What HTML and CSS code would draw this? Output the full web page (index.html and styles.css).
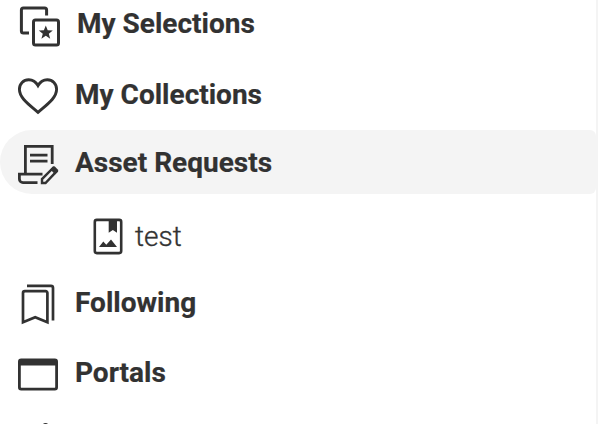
FILE: index.html
```html
<!DOCTYPE html>
<html lang="en">
<head>
<meta charset="utf-8">
<title>Navigation</title>
<link rel="stylesheet" href="styles.css">
</head>
<body>
<nav class="sidebar">
  <a class="item item-selections">
    <svg class="icon" viewBox="0 -9 74 64" fill="none" stroke="currentColor" stroke-width="3">
      <path d="M29 33H23.400a2 2 0 0 1-2-2V9.900a2 2 0 0 1 2-2H44.600a2 2 0 0 1 2 2V15.500"/>
      <rect x="33.500" y="19.900" width="25" height="25.200" rx="2"/>
      <path fill="currentColor" stroke="none" d="M45.800 25.400l1.900 4.900 5.100.2-4 3.200 1.400 5-4.400-2.900-4.400 2.900 1.400-5-4-3.200 5.100-.2z"/>
    </svg>
    <span class="label">My Selections</span>
  </a>
  <a class="item">
    <svg class="icon" viewBox="0 62 74 64" fill="none" stroke="currentColor" stroke-width="2.900">
      <path d="M38 112.300C29 104.500 19.400 98 19.400 89.300C19.400 83.700 23.400 79.700 28.700 79.700C32.500 79.700 36 82 38 85.600C40 82 43.500 79.700 47.300 79.700C52.600 79.700 56.600 83.700 56.600 89.300C56.600 98 47 104.500 38 112.300Z"/>
    </svg>
    <span class="label">My Collections</span>
  </a>
  <a class="item item-active">
    <svg class="icon" viewBox="0 130 74 64" fill="none" stroke="currentColor" stroke-width="2.800">
      <path d="M25.400 173V146.300H52.200V164M30 155.200H47.500M30 161.200H47.500"/>
      <path d="M42.500 174.200H19.400V179a3.600 3.600 0 0 0 3.600 3.600H37.500"/>
      <path stroke-width="2.400" d="M42 183V179.100L53.100 168L56.500 171.400L45.500 183Z"/>
      <path fill="currentColor" stroke="none" d="M50.300 169.400L53.200 166.500Q54 166 54.800 166.500L58 169.800Q58.500 170.700 58 171.500L55.100 174.300Z"/>
    </svg>
    <span class="label">Asset Requests</span>
  </a>
  <a class="item item-child">
    <svg class="icon icon-child" viewBox="76 204 56 64" fill="none" stroke="currentColor" stroke-width="2.600">
      <rect x="94.800" y="219.900" width="26.400" height="33.200" rx="2"/>
      <path fill="currentColor" stroke="none" d="M108.700 220H117V232.800L112.850 230L108.700 232.800ZM99 247L103.300 241.500L106.300 244.700L111 239.500L117 247Z"/>
    </svg>
    <span class="label">test</span>
  </a>
  <a class="item item-following">
    <svg class="icon" viewBox="0 270 74 64" fill="none" stroke="currentColor" stroke-width="2.700">
      <path d="M23 322.300V292.900a1.800 1.800 0 0 1 1.800-1.800H45.600a1.800 1.800 0 0 1 1.800 1.800V322.300L35.200 317.200Z"/>
      <path d="M27 285.800H51a2 2 0 0 1 2 2V320.500"/>
    </svg>
    <span class="label">Following</span>
  </a>
  <a class="item item-portals">
    <svg class="icon" viewBox="0 340 74 64" fill="none" stroke="currentColor" stroke-width="2.800">
      <rect x="19.400" y="359.900" width="37.200" height="29.200" rx="1.800"/>
      <path stroke="none" fill="currentColor" d="M19 360H57V365.500H19Z"/>
    </svg>
    <span class="label">Portals</span>
  </a>
  <a class="item item-next">
    <svg class="icon" viewBox="0 410 74 64" fill="currentColor">
      <circle cx="45.500" cy="426" r="3"/>
    </svg>
  </a>
</nav>
</body>
</html>
```
FILE: styles.css
```css
body {
  margin: 0;
  height: 424px;
  overflow: hidden;
  background: #fff;
  color: #323232;
  font-family: Roboto, sans-serif;
}

.sidebar {
  box-sizing: border-box;
  display: flex;
  flex-direction: column;
  height: 424px;
  overflow: hidden;
  border-right: 2px solid #f4f4f4;
}

.item {
  display: flex;
  flex: none;
  height: 64px;
  font-size: 28px;
  font-weight: 700;
  line-height: 66px;
  white-space: nowrap;
  -webkit-text-stroke: 0.2px currentColor;
}

.icon {
  flex: none;
  width: 74px;
  height: 64px;
}

.icon-child {
  width: 56px;
}

.label {
  margin-left: 1px;
}

.item-selections {
  margin: -9px 0 7px;
}

.item-selections .label {
  margin-left: 3px;
}

.item-active {
  margin: 4px 0 10px;
  background: #f4f4f4;
  border-radius: 32px 6px 6px 32px;
}

.item-child {
  padding-left: 76px;
  font-weight: 300;
  -webkit-text-stroke: 0.35px currentColor;
}

.item-child .label {
  margin-left: 3px;
}

.item-following {
  margin-top: 2px;
}

.item-portals {
  margin: 6px 0;
}
```
